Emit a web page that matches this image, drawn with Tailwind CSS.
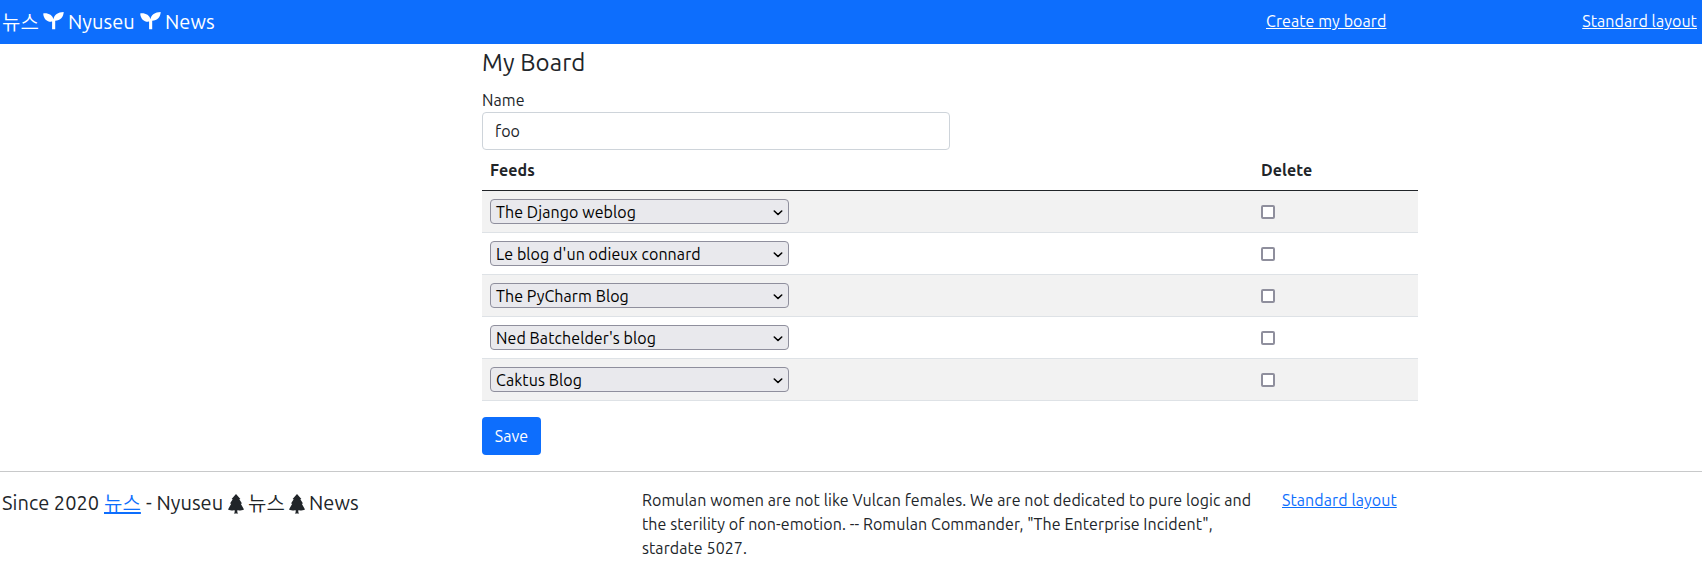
<!DOCTYPE html>
<html lang="en">
<head>
<meta charset="utf-8">
<title>Nyuseu News - My Board</title>
<script src="https://cdn.jsdelivr.net/npm/@tailwindcss/browser@4"></script>
</head>
<body class="bg-white text-[#212529] text-base leading-6 tracking-[0.08px] font-[Ubuntu,'Noto_Sans','Noto_Sans_CJK_KR',sans-serif]">
<svg class="hidden">
  <symbol id="sprout" viewBox="0 0 21 18"><path d="M.2 1.4C5.2.7 9.6 3.1 10.5 7.2 11.1 3.1 15 .3 20.7.1 20.5 5.2 17.4 8.6 12.2 8.7V17.3H9.1V9.6C4.5 10.2.6 7.3.2 1.4Z" fill="currentColor"/></symbol>
  <symbol id="tree" viewBox="0 0 16 20"><path d="M8 0 12.4 5 11.3 5.3 14 9.4 12.8 9.8 16 15.4C14 16.4 11.5 16.5 9.3 16.3V18.2L10.2 19.6H5.8L6.7 18.2V16.3C4.5 16.5 2 16.4 0 15.4L3.2 9.8 2 9.4 4.7 5.3 3.6 5Z" fill="currentColor"/></symbol>
  <symbol id="chevron" viewBox="0 0 10 6"><path d="M1.3 1 5 4.5 8.7 1" fill="none" stroke="currentColor" stroke-width="1.6" stroke-linecap="round" stroke-linejoin="round"/></symbol>
</svg>

<header class="flex h-11 items-center bg-[#0d6efd] pl-0.5 pr-[5px] text-white">
  <h1 class="flex w-[1264px] items-center text-xl leading-[30px] tracking-[0.04px] whitespace-nowrap">
    <span class="w-[41px] font-['Noto_Sans_CJK_KR'] font-[350]">뉴스</span>
    <svg class="mb-0.5 h-[18px] w-[21px]"><use href="#sprout"/></svg>
    <span class="w-[76px] pl-1">Nyuseu</span>
    <svg class="mb-0.5 h-[18px] w-[21px]"><use href="#sprout"/></svg>
    <span class="pl-1">News</span>
  </h1>
  <a href="#" class="mb-0.5 underline">Create my board</a>
  <a href="#" class="mb-0.5 ml-auto underline">Standard layout</a>
</header>

<main class="ml-[482px] w-[936px]">
  <h2 class="pt-1 text-2xl leading-[29px] tracking-[0.1px]">My Board</h2>
  <form>
    <label for="name" class="mt-[11px] block">Name</label>
    <input id="name" value="foo" class="block h-[38px] w-[468px] rounded border border-[#ced4da] px-3 tracking-[0.08px]">
    <div>
      <div class="flex h-[41px] border-b border-[#212529] px-2 pt-2 font-bold"><span class="w-[771px]">Feeds</span><span>Delete</span></div>
      <div class="flex h-[42px] items-center border-b border-[#dee2e6] bg-[#f2f2f2] px-2"><div class="mr-[472px] flex h-[25px] w-[299px] items-center justify-between rounded border border-[#8f8f9d] bg-[#e9e9ed] px-[5px] text-black"><span>The Django weblog</span><svg class="mt-0.5 h-1.5 w-2.5"><use href="#chevron"/></svg></div><input type="checkbox" aria-label="Delete" class="mt-px size-3.5 appearance-none rounded-xs border-2 border-[#8f8f9d] bg-white"></div>
      <div class="flex h-[42px] items-center border-b border-[#dee2e6] px-2"><div class="mr-[472px] flex h-[25px] w-[299px] items-center justify-between rounded border border-[#8f8f9d] bg-[#e9e9ed] px-[5px] text-black"><span>Le blog d'un odieux connard</span><svg class="mt-0.5 h-1.5 w-2.5"><use href="#chevron"/></svg></div><input type="checkbox" aria-label="Delete" class="mt-px size-3.5 appearance-none rounded-xs border-2 border-[#8f8f9d] bg-white"></div>
      <div class="flex h-[42px] items-center border-b border-[#dee2e6] bg-[#f2f2f2] px-2"><div class="mr-[472px] flex h-[25px] w-[299px] items-center justify-between rounded border border-[#8f8f9d] bg-[#e9e9ed] px-[5px] text-black"><span>The PyCharm Blog</span><svg class="mt-0.5 h-1.5 w-2.5"><use href="#chevron"/></svg></div><input type="checkbox" aria-label="Delete" class="mt-px size-3.5 appearance-none rounded-xs border-2 border-[#8f8f9d] bg-white"></div>
      <div class="flex h-[42px] items-center border-b border-[#dee2e6] px-2"><div class="mr-[472px] flex h-[25px] w-[299px] items-center justify-between rounded border border-[#8f8f9d] bg-[#e9e9ed] px-[5px] text-black"><span>Ned Batchelder's blog</span><svg class="mt-0.5 h-1.5 w-2.5"><use href="#chevron"/></svg></div><input type="checkbox" aria-label="Delete" class="mt-px size-3.5 appearance-none rounded-xs border-2 border-[#8f8f9d] bg-white"></div>
      <div class="flex h-[42px] items-center border-b border-[#dee2e6] bg-[#f2f2f2] px-2"><div class="mr-[472px] flex h-[25px] w-[299px] items-center justify-between rounded border border-[#8f8f9d] bg-[#e9e9ed] px-[5px] text-black"><span>Caktus Blog</span><svg class="mt-0.5 h-1.5 w-2.5"><use href="#chevron"/></svg></div><input type="checkbox" aria-label="Delete" class="mt-px size-3.5 appearance-none rounded-xs border-2 border-[#8f8f9d] bg-white"></div>
    </div>
    <button type="button" class="mt-4 block h-[38px] w-[59px] rounded bg-[#0d6efd] text-white">Save</button>
  </form>
</main>

<footer class="mt-4 flex items-start border-t border-[#c8c9ca] pt-4 pl-0.5">
  <p class="flex w-[640px] items-center text-xl leading-[30px] tracking-[0.04px] whitespace-nowrap">
    <span class="w-[102px]">Since 2020</span>
    <a href="#" class="w-[37px] font-['Noto_Sans_CJK_KR'] font-[350] text-[#0d6efd] underline">뉴스</a>
    <span class="w-[87px] pl-[5px]">- Nyuseu</span>
    <svg class="mt-px h-5 w-4"><use href="#tree"/></svg>
    <span class="w-[45px] pl-1 font-['Noto_Sans_CJK_KR'] font-[350]">뉴스</span>
    <svg class="mt-px h-5 w-4"><use href="#tree"/></svg>
    <span class="pl-1">News</span>
  </p>
  <p class="w-[640px] pr-6">Romulan women are not like Vulcan females. We are not dedicated to pure logic and the sterility of non-emotion. -- Romulan Commander, "The Enterprise Incident", stardate 5027.</p>
  <a href="#" class="text-[#0d6efd] underline">Standard layout</a>
</footer>
</body>
</html>
